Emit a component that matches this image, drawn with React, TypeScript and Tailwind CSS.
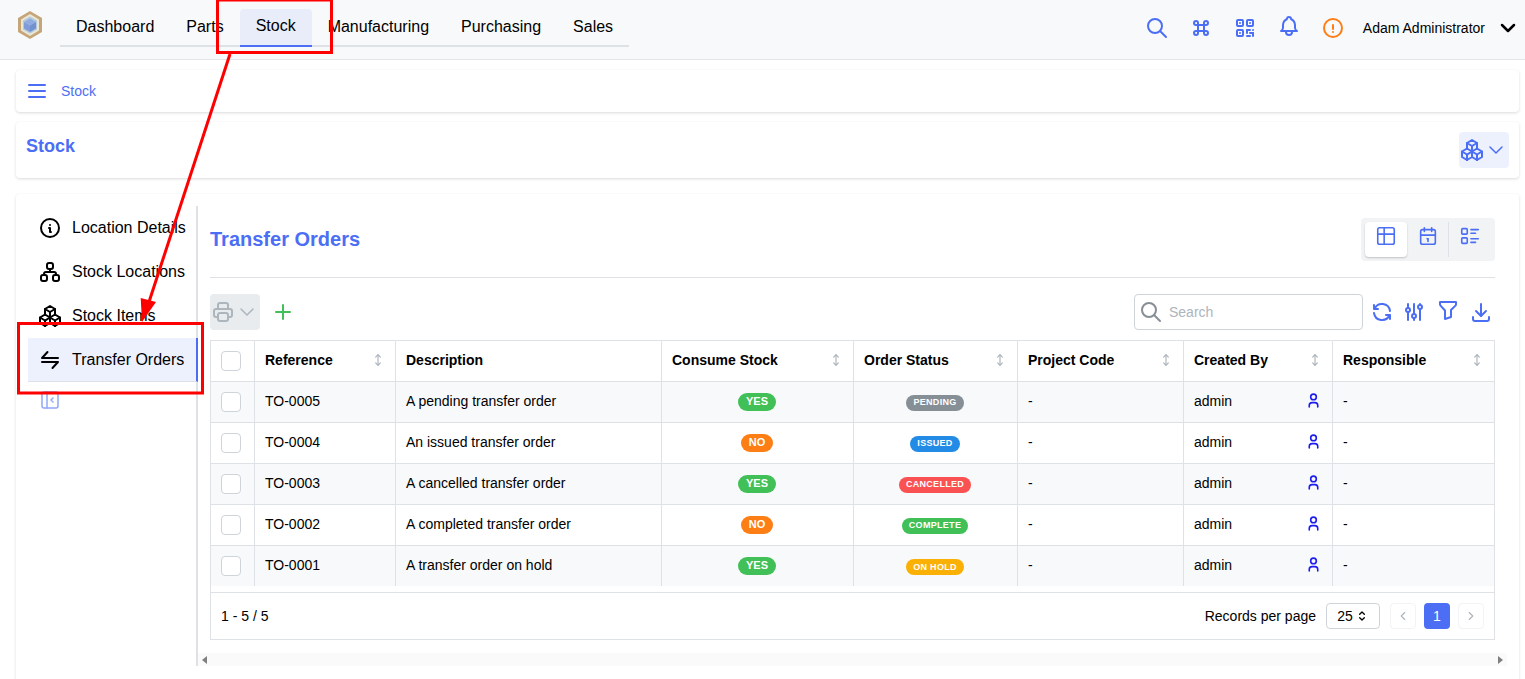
import {
  TbAdjustments,
  TbArrowsVertical,
  TbBell,
  TbCalendar,
  TbChevronDown,
  TbChevronLeft,
  TbChevronRight,
  TbCommand,
  TbDownload,
  TbExclamationCircle,
  TbFilter,
  TbInfoCircle,
  TbLayoutSidebarLeftCollapse,
  TbListDetails,
  TbMenu2,
  TbPackages,
  TbPlus,
  TbPrinter,
  TbQrcode,
  TbRefresh,
  TbSearch,
  TbSelector,
  TbSitemap,
  TbTable,
  TbTransfer,
  TbUser,
} from "react-icons/tb";

const tabs = ["Dashboard", "Parts", "Stock", "Manufacturing", "Purchasing", "Sales"];

const painel = [
  { nome: "Location Details", icone: TbInfoCircle },
  { nome: "Stock Locations", icone: TbSitemap },
  { nome: "Stock Items", icone: TbPackages },
  { nome: "Transfer Orders", icone: TbTransfer },
];

const colunas = [
  { nome: "Reference", largura: "w-[141px]", ordena: true },
  { nome: "Description", largura: "w-[266px]", ordena: false },
  { nome: "Consume Stock", largura: "w-[192px]", ordena: true },
  { nome: "Order Status", largura: "w-[164px]", ordena: true },
  { nome: "Project Code", largura: "w-[166px]", ordena: true },
  { nome: "Created By", largura: "w-[149px]", ordena: true },
  { nome: "Responsible", largura: "w-auto", ordena: true },
];

const pedidos = [
  { ref: "TO-0005", desc: "A pending transfer order", consume: true, status: "PENDING", cor: "bg-[#868e96]" },
  { ref: "TO-0004", desc: "An issued transfer order", consume: false, status: "ISSUED", cor: "bg-[#228be6]" },
  { ref: "TO-0003", desc: "A cancelled transfer order", consume: true, status: "CANCELLED", cor: "bg-[#fa5252]" },
  { ref: "TO-0002", desc: "A completed transfer order", consume: false, status: "COMPLETE", cor: "bg-[#40c057]" },
  { ref: "TO-0001", desc: "A transfer order on hold", consume: true, status: "ON HOLD", cor: "bg-[#fab005]" },
];

function Logo() {
  return (
    <svg width="28" height="30" viewBox="0 0 28 30">
      <polygon points="14,1 26,8 26,22 14,29 2,22 2,8" fill="#c6a678" />
      <polygon points="14,4 23,9.5 23,20.5 14,26 5,20.5 5,9.5" fill="#eae6d6" />
      <polygon points="14,6.5 21,10.5 21,19.5 14,23.5 7,19.5 7,10.5" fill="#b4cadb" />
      <polygon points="14,8.5 20,12 14,15.5 8,12" fill="#8fabe2" />
      <polygon points="8,12 14,15.5 14,22 8,18.5" fill="#7f9cd8" />
      <polygon points="20,12 14,15.5 14,22 20,18.5" fill="#7390d0" />
    </svg>
  );
}

// setas e caixas vermelhas por cima da tela
function Anotacoes() {
  return (
    <svg className="absolute top-0 left-0 pointer-events-none" width="1525" height="679">
      <rect x="217.5" y="0" width="114" height="52.5" fill="none" stroke="#ff0000" strokeWidth="3" />
      <line x1="230" y1="54" x2="148" y2="305" stroke="#ff0000" strokeWidth="3" />
      <polygon points="140.7,298 156,302 142,322" fill="#ff0000" />
      <rect x="18.5" y="323.5" width="184" height="69.5" fill="none" stroke="#ff0000" strokeWidth="3" />
    </svg>
  );
}

export default function App() {
  return (
    <div className="relative h-[679px] w-[1525px] overflow-hidden bg-white text-black font-['Liberation_Sans',Arial,sans-serif] text-sm">
      {/* topo */}
      <header className="flex h-[60px] items-center border-b border-[#e3e5e8] bg-[#f8f9fa] pl-4 pr-[5px]">
        <div className="-mt-[9px] w-[44px]">
          <Logo />
        </div>
        <nav className="mb-[12px] flex h-[38px] border-b-2 border-[#dee2e6] self-end">
          {tabs.map((t) => (
            <div
              key={t}
              className={`-mb-[2px] flex h-[38px] items-center rounded-t px-4 pb-[2px] text-base ${
                t === "Stock" ? "border-b-2 border-[#4c6ef5] bg-[#e9ecf9]" : ""
              }`}
            >
              {t}
            </div>
          ))}
        </nav>
        <div className="-mt-[3px] ml-auto flex items-center text-[#4c6ef5]">
          <TbSearch size={24} className="mr-5" />
          <TbCommand size={24} className="mr-5" />
          <TbQrcode size={24} className="mr-5" />
          <TbBell size={24} className="mr-5 -mt-[5px]" />
          <TbExclamationCircle size={24} className="mr-[18px] text-[#fd7e14]" />
          <span className="mr-[11px] text-sm text-black">Adam Administrator</span>
          <TbChevronDown size={24} className="text-black" strokeWidth={2.5} />
        </div>
      </header>

      <div className="flex flex-col gap-[10px] pl-4 pr-[6px] pt-[10px]">
        {/* breadcrumb */}
        <div className="flex h-[42px] items-center rounded bg-white pl-[9px] shadow-[0_1px_3px_rgba(0,0,0,0.15)]">
          <TbMenu2 size={24} className="text-[#4c6ef5]" />
          <span className="ml-3 text-sm text-[#4c6ef5]">Stock</span>
        </div>

        {/* titulo */}
        <div className="flex h-[56px] items-center justify-between rounded bg-white pl-[10px] pr-[10px] shadow-[0_1px_3px_rgba(0,0,0,0.15)]">
          <h1 className="-mt-[8px] text-lg font-bold text-[#4c6ef5]">Stock</h1>
          <div className="flex h-9 w-[50px] items-center rounded-sm bg-[#edf1fe] pl-px text-[#4c6ef5]">
            <TbPackages size={24} />
            <TbChevronDown size={24} strokeWidth={1.5} />
          </div>
        </div>

        {/* painel */}
        <div className="mt-[6px] flex h-[500px] rounded bg-white pl-3 pt-3 shadow-[0_1px_3px_rgba(0,0,0,0.15)]">
          <aside className="flex h-[460px] w-[170px] shrink-0 flex-col border-r-2 border-[#dee2e6]">
            {painel.map((p) => {
              const Icone = p.icone;
              const ativo = p.nome === "Transfer Orders";
              return (
                <div
                  key={p.nome}
                  className={`-mr-[2px] flex h-[44px] items-center gap-[10px] pl-[10px] text-base ${
                    ativo ? "border-r-2 border-b border-[#4c6ef5] border-b-[#dee2e6] bg-[#edf1fe]" : ""
                  }`}
                >
                  <Icone size={24} />
                  <span>{p.nome}</span>
                </div>
              );
            })}
            <div className="mt-[6px] pl-[10px] text-[#91a8f8]">
              <TbLayoutSidebarLeftCollapse size={24} strokeWidth={1.5} />
            </div>
          </aside>

          <main className="ml-3 flex w-[1297px] flex-col">
            <div className="flex h-[72px] w-[1285px] items-center justify-between border-b border-[#dee2e6] pt-0">
              <h2 className="-mt-[6px] text-xl font-bold text-[#4c6ef5]">Transfer Orders</h2>
              <div className="-mt-[4px] flex h-[43px] w-[134px] items-center rounded-sm bg-[#f1f3f5] px-1 text-[#4c6ef5]">
                <div className="flex h-[35px] w-[42px] items-start justify-center rounded bg-white pt-[3px] shadow-[0_1px_2px_rgba(0,0,0,0.2)]">
                  <TbTable size={22} strokeWidth={1.75} />
                </div>
                <div className="flex h-[35px] w-[42px] items-start justify-center border-r border-[#dee2e6] pt-[3px]">
                  <TbCalendar size={22} strokeWidth={1.75} />
                </div>
                <div className="flex h-[35px] w-[42px] items-start justify-center pt-[3px]">
                  <TbListDetails size={22} strokeWidth={1.75} />
                </div>
              </div>
            </div>

            {/* barra de ferramentas */}
            <div className="mt-4 flex h-9 w-[1285px] items-center">
              <div className="flex h-9 w-[50px] items-center rounded-sm bg-[#e9ecef] pl-px text-[#adb5bd]">
                <TbPrinter size={24} />
                <TbChevronDown size={24} strokeWidth={1.5} />
              </div>
              <TbPlus size={24} className="ml-[11px] text-[#40c057]" />
              <div className="ml-auto flex h-9 w-[229px] items-center rounded-sm border border-[#ced4da] bg-white pl-1">
                <TbSearch size={24} className="text-[#868e96]" />
                <span className="ml-[6px] text-sm text-[#adb5bd]">Search</span>
              </div>
              <div className="ml-[7px] mr-[2px] flex items-center text-[#4c6ef5]">
                <TbRefresh size={24} />
                <TbAdjustments size={24} className="ml-[8px]" />
                <TbFilter size={24} className="ml-[10px] -mt-[4px]" />
                <TbDownload size={24} className="ml-[9px]" />
              </div>
            </div>

            {/* tabela */}
            <div className="mt-[10px] h-[300px] w-[1285px] border border-[#dee2e6]">
              <table className="w-full table-fixed border-collapse">
                <thead>
                  <tr className="h-[40px] border-b border-[#dee2e6]">
                    <th className="w-[43px] border-r border-[#dee2e6] pl-[10px]">
                      <div className="h-5 w-5 rounded-sm border border-[#ced4da] bg-white" />
                    </th>
                    {colunas.map((c, i) => (
                      <th
                        key={c.nome}
                        className={`${c.largura} pb-[2px] pl-[10.5px] pr-[10px] text-left text-sm font-bold ${
                          i < colunas.length - 1 ? "border-r border-[#dee2e6]" : ""
                        }`}
                      >
                        <div className="flex items-center justify-between">
                          <span>{c.nome}</span>
                          {c.ordena && <TbArrowsVertical size={14} className="text-[#adb5bd]" />}
                        </div>
                      </th>
                    ))}
                  </tr>
                </thead>
                <tbody>
                  {pedidos.map((p, i) => (
                    <tr
                      key={p.ref}
                      className={`h-[41px] ${i % 2 === 0 ? "bg-[#f8f9fa]" : "bg-white"} ${
                        i < pedidos.length - 1 ? "border-b border-[#dee2e6]" : ""
                      }`}
                    >
                      <td className="border-r border-[#dee2e6] pl-[10px]">
                        <div className="h-5 w-5 rounded-sm border border-[#ced4da] bg-white" />
                      </td>
                      <td className="border-r border-[#dee2e6] pb-[2px] pl-[10.5px]">{p.ref}</td>
                      <td className="border-r border-[#dee2e6] pb-[2px] pl-[10.5px]">{p.desc}</td>
                      <td className="border-r border-[#dee2e6] px-[10px] pb-[2px] text-center">
                        <span
                          className={`inline-flex h-[18px] items-center rounded-full px-[8px] text-[11px] font-bold text-white ${
                            p.consume ? "bg-[#40c057]" : "bg-[#fd7e14]"
                          }`}
                        >
                          {p.consume ? "YES" : "NO"}
                        </span>
                      </td>
                      <td className="border-r border-[#dee2e6] px-[10px] pb-[2px] text-center">
                        <span
                          className={`inline-flex h-4 items-center rounded-full px-[7px] text-[9px] font-bold tracking-[0.3px] text-white ${p.cor}`}
                        >
                          {p.status}
                        </span>
                      </td>
                      <td className="border-r border-[#dee2e6] pb-[2px] pl-[10.5px]">-</td>
                      <td className="border-r border-[#dee2e6] pb-[2px] pl-[10.5px] pr-[10px]">
                        <div className="flex items-center justify-between">
                          <span>admin</span>
                          <TbUser size={17} className="text-[#1c1cf0]" strokeWidth={2.25} />
                        </div>
                      </td>
                      <td className="pb-[2px] pl-[10.5px]">-</td>
                    </tr>
                  ))}
                </tbody>
              </table>
              <div className="mt-[6px] flex h-[47px] items-center border-t border-[#dee2e6] px-[10px]">
                <span>1 - 5 / 5</span>
                <div className="ml-auto flex items-center">
                  <span>Records per page</span>
                  <div className="ml-[10px] flex h-[26px] w-[54px] items-center justify-center gap-[2px] rounded-sm border border-[#ced4da]">
                    25
                    <TbSelector size={14} strokeWidth={2.25} />
                  </div>
                  <div className="ml-[10px] flex h-[26px] w-[26px] items-center justify-center rounded-sm border border-[#f1f3f5] text-[#adb5bd]">
                    <TbChevronLeft size={14} />
                  </div>
                  <div className="ml-2 flex h-[26px] w-[26px] items-center justify-center rounded-sm bg-[#4c6ef5] text-white">
                    1
                  </div>
                  <div className="ml-2 flex h-[26px] w-[26px] items-center justify-center rounded-sm border border-[#f1f3f5] text-[#adb5bd]">
                    <TbChevronRight size={14} />
                  </div>
                </div>
              </div>
            </div>

            {/* barra de rolagem */}
            <div className="mt-[13px] -ml-3 flex h-[13px] w-[1309px] items-center justify-between bg-[#fafafa] px-[4px]">
              <div className="h-0 w-0 border-y-[4px] border-r-[5px] border-y-transparent border-r-[#7f7f7f]" />
              <div className="h-0 w-0 border-y-[4px] border-l-[5px] border-y-transparent border-l-[#7f7f7f]" />
            </div>
          </main>
        </div>
      </div>

      <Anotacoes />
    </div>
  );
}
